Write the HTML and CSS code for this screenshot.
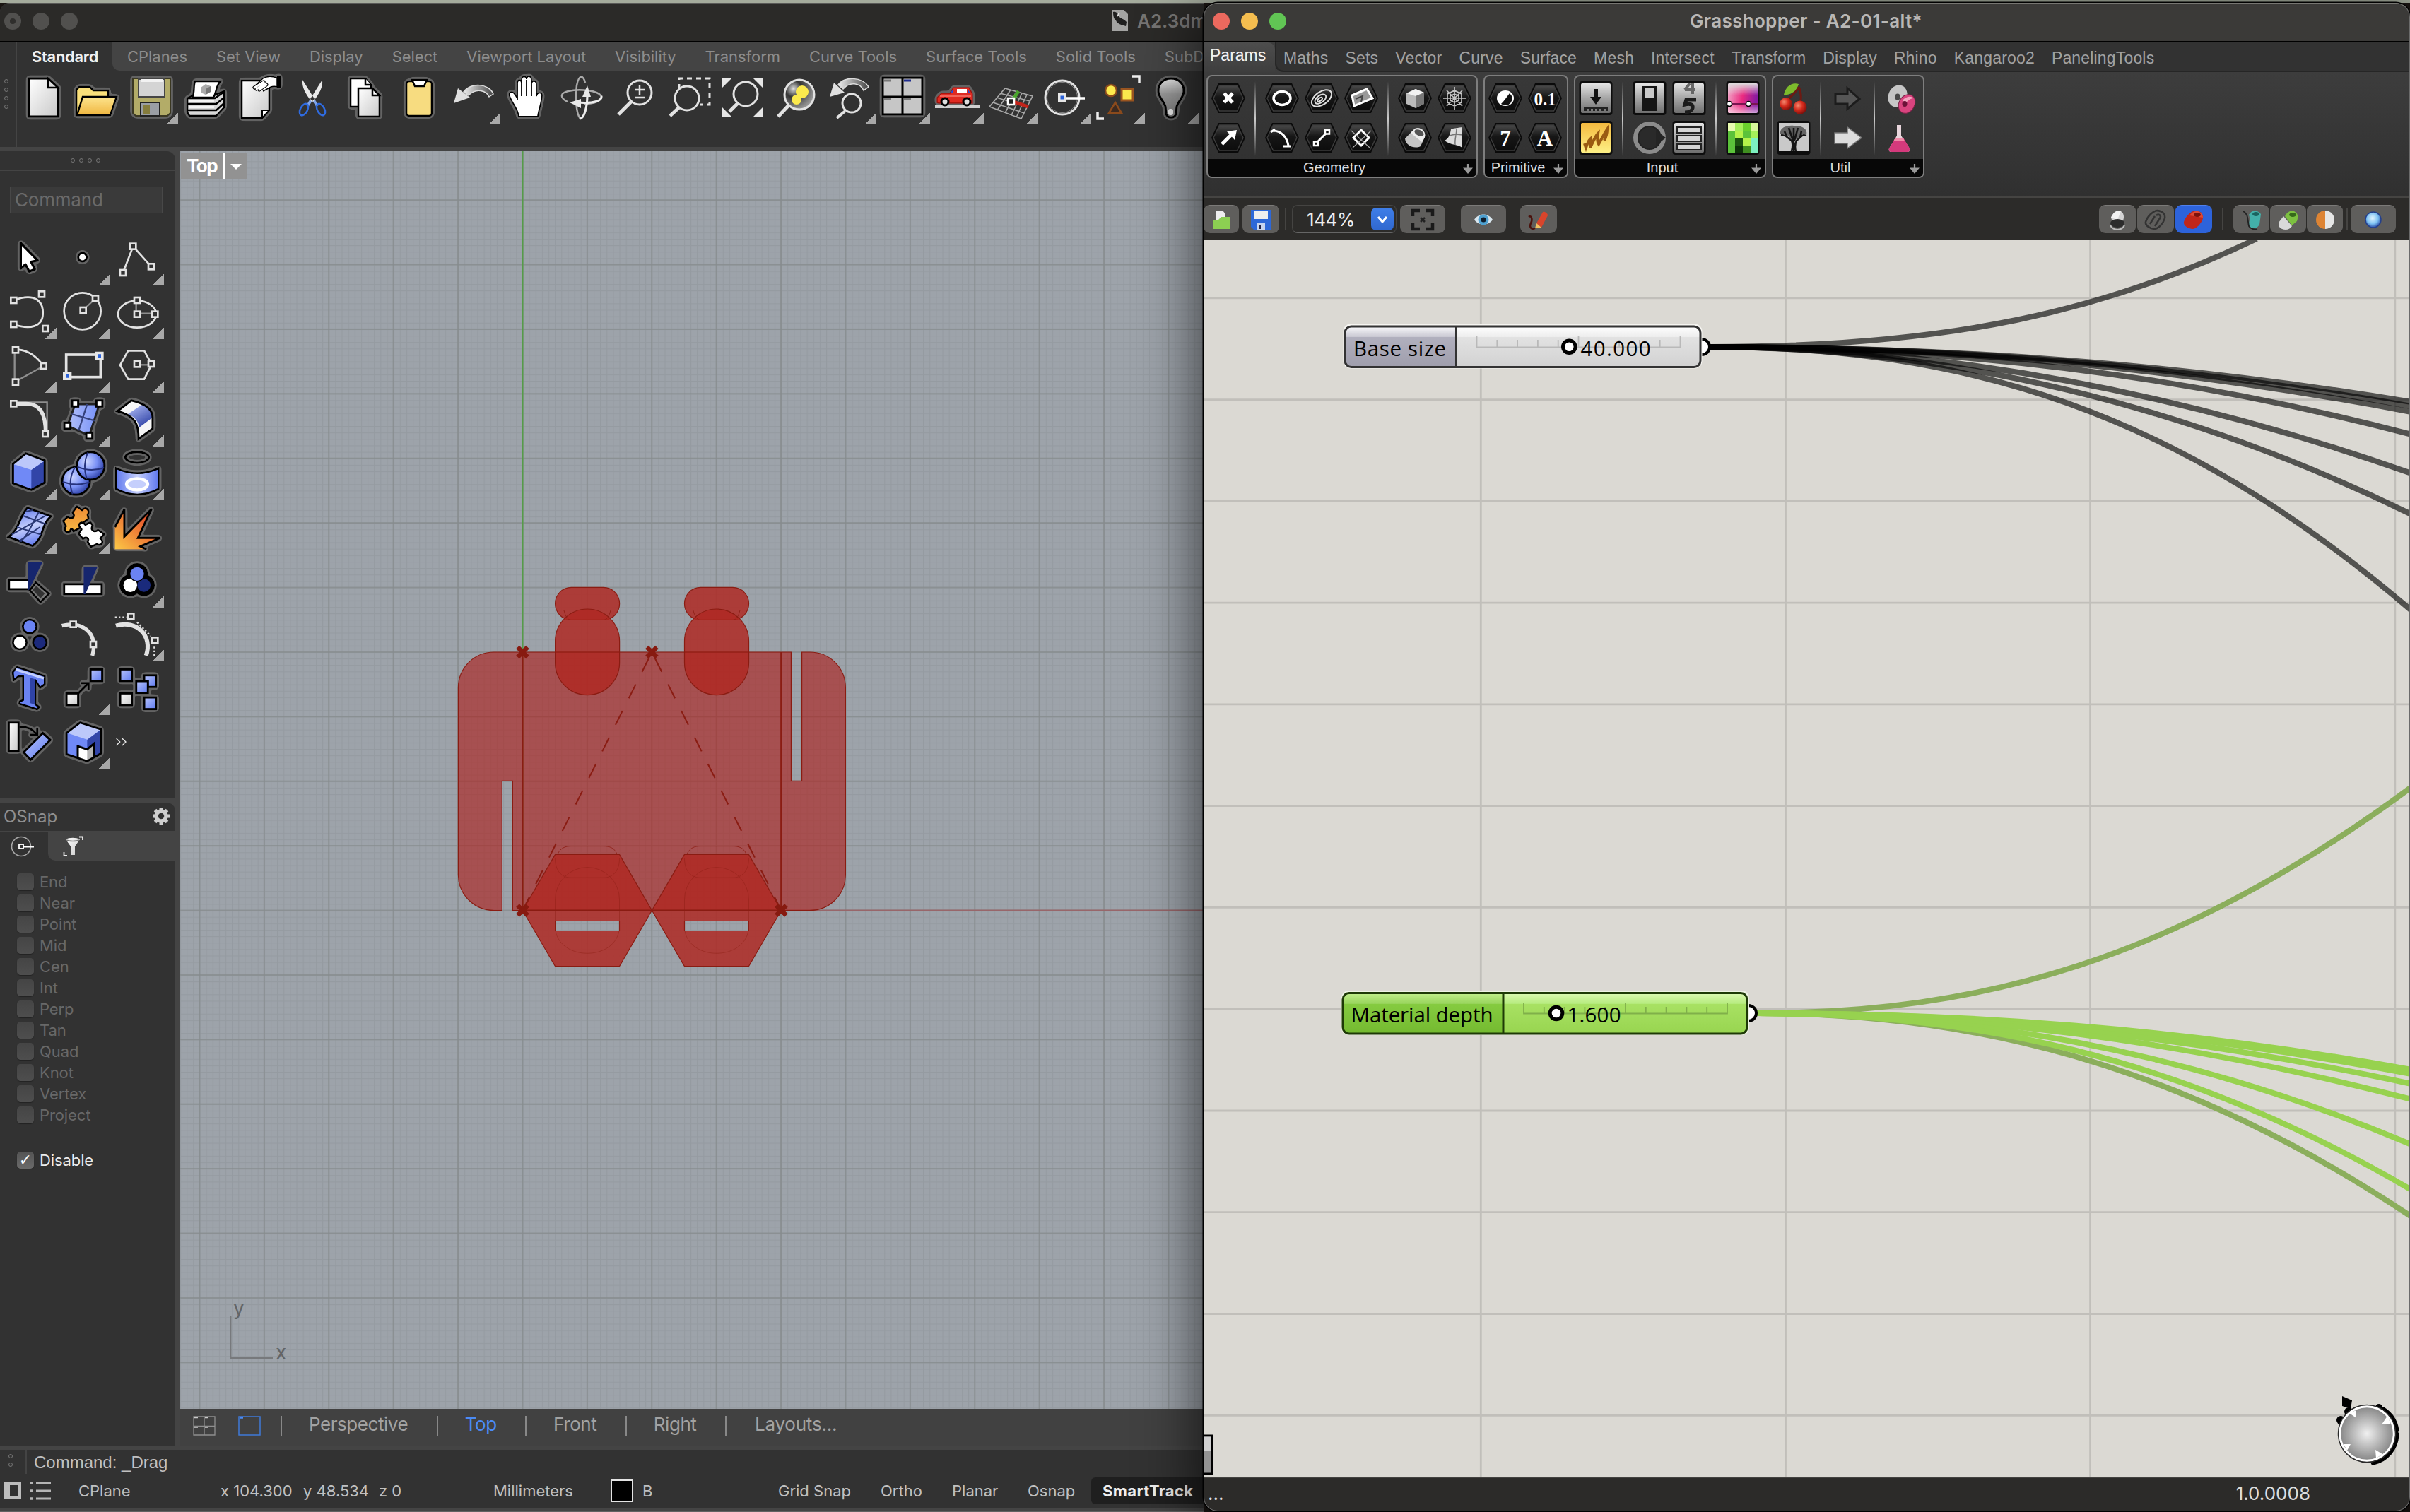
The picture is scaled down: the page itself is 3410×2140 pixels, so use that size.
FILE: index.html
```html
<!DOCTYPE html>
<html lang="en">
<head>
<meta charset="utf-8">
<title>Grasshopper - A2-01-alt*</title>
<link rel="stylesheet" href="styles.css">
</head>
<body>
<svg class="defs" width="0" height="0" aria-hidden="true">
  <defs>
    <filter id="halo" x="-30%" y="-30%" width="160%" height="160%"><feGaussianBlur in="SourceAlpha" stdDeviation="6"/><feComponentTransfer><feFuncA type="linear" slope="14" intercept="-0.9"/></feComponentTransfer><feComposite in2="SourceAlpha" operator="over" result="m"/><feFlood flood-color="#636363"/><feComposite in2="m" operator="in"/><feMerge><feMergeNode/><feMergeNode in="SourceGraphic"/></feMerge></filter>
    <filter id="halo2" x="-30%" y="-30%" width="160%" height="160%"><feGaussianBlur in="SourceAlpha" stdDeviation="2"/><feComponentTransfer><feFuncA type="linear" slope="14" intercept="-0.9"/></feComponentTransfer><feComposite in2="SourceAlpha" operator="over" result="m"/><feFlood flood-color="#636363"/><feComposite in2="m" operator="in"/><feMerge><feMergeNode/><feMergeNode in="SourceGraphic"/></feMerge></filter>
    <linearGradient id="paper" x1="0" y1="0" x2="1" y2="1"><stop offset="0" stop-color="#fff"/><stop offset="1" stop-color="#c9c9c9"/></linearGradient>
    <linearGradient id="gold" x1="0" y1="0" x2="0" y2="1"><stop offset="0" stop-color="#fde58e"/><stop offset="1" stop-color="#efb53f"/></linearGradient>
    <linearGradient id="blue" x1="0" y1="0" x2="1" y2="1"><stop offset="0" stop-color="#b9c5fb"/><stop offset="1" stop-color="#5f7bf0"/></linearGradient>
    <linearGradient id="blueV" x1="0" y1="0" x2="1" y2="0"><stop offset="0" stop-color="#b3c0fb"/><stop offset="1" stop-color="#7590f6"/></linearGradient>
    <linearGradient id="blueH" x1="0" y1="0" x2="1" y2="0"><stop offset="0" stop-color="#5f78ee"/><stop offset=".5" stop-color="#c5cffc"/><stop offset="1" stop-color="#5f78ee"/></linearGradient>
    <linearGradient id="sheet" x1=".3" y1="0" x2=".6" y2="1"><stop offset="0" stop-color="#5f78ee"/><stop offset=".5" stop-color="#c5cffc"/><stop offset="1" stop-color="#5f78ee"/></linearGradient>
    <linearGradient id="fold" x1="0" y1="0" x2=".6" y2="1"><stop offset="0" stop-color="#b9c5fb"/><stop offset="1" stop-color="#3346a8"/></linearGradient>
    <radialGradient id="ball" cx=".35" cy=".35" r=".75"><stop offset="0" stop-color="#cfd8ff"/><stop offset=".5" stop-color="#7b92f6"/><stop offset="1" stop-color="#1d2f96"/></radialGradient>
    <linearGradient id="fire" x1="0" y1="1" x2="1" y2="0"><stop offset="0" stop-color="#fbc847"/><stop offset=".5" stop-color="#ee7a35"/><stop offset="1" stop-color="#e02a22"/></linearGradient>
    <linearGradient id="orange" x1="0" y1="0" x2="0" y2="1"><stop offset="0" stop-color="#ec8a35"/><stop offset="1" stop-color="#f7b944"/></linearGradient>
    <linearGradient id="arrow" x1="0" y1="0" x2="1" y2="0"><stop offset="0" stop-color="#eee"/><stop offset=".5" stop-color="#9a9a9a"/><stop offset="1" stop-color="#444"/></linearGradient>
    <radialGradient id="dome" cx=".3" cy=".3" r=".8"><stop offset="0" stop-color="#ddd"/><stop offset=".35" stop-color="#333"/><stop offset="1" stop-color="#aaa"/></radialGradient>
    <linearGradient id="bulb" x1="0" y1="0" x2="0" y2="1"><stop offset="0" stop-color="#e8e8e8"/><stop offset=".4" stop-color="#999"/><stop offset="1" stop-color="#777"/></linearGradient>
    <linearGradient id="hexfill" x1="0" y1="0" x2="0" y2="1"><stop offset="0" stop-color="#4a4a4a"/><stop offset=".45" stop-color="#161616"/><stop offset="1" stop-color="#0c0c0c"/></linearGradient>
    <linearGradient id="steel" x1="0" y1="0" x2="0" y2="1"><stop offset="0" stop-color="#e4e4e4"/><stop offset=".5" stop-color="#a5a5a5"/><stop offset="1" stop-color="#6f6f6f"/></linearGradient>
    <linearGradient id="pink" x1="0" y1="0" x2="1" y2=".15"><stop offset="0" stop-color="#f3aaca"/><stop offset=".55" stop-color="#ea2a80"/><stop offset="1" stop-color="#8a1aa0"/></linearGradient>
    <linearGradient id="sheen" x1="0" y1="0" x2="0" y2="1"><stop offset="0" stop-color="#ddd"/><stop offset=".4" stop-color="#ddd" stop-opacity="0"/><stop offset=".7" stop-color="#fff" stop-opacity="0"/><stop offset="1" stop-color="#fff" stop-opacity=".6"/></linearGradient>
    <linearGradient id="note" x1="0" y1="0" x2="0" y2="1"><stop offset="0" stop-color="#f4b93f"/><stop offset="1" stop-color="#fdf085"/></linearGradient>
    <radialGradient id="cherry" cx=".35" cy=".35" r=".7"><stop offset="0" stop-color="#f58a70"/><stop offset=".5" stop-color="#d42a1c"/><stop offset="1" stop-color="#7c0f0a"/></radialGradient>
    <radialGradient id="sky" cx=".45" cy=".4" r=".6"><stop offset="0" stop-color="#e4f6ff"/><stop offset=".6" stop-color="#7ec2f3"/><stop offset="1" stop-color="#2c4fa8"/></radialGradient>
    <radialGradient id="dial"><stop offset="0" stop-color="#f0f0f0"/><stop offset="1" stop-color="#868686"/></radialGradient>
    <linearGradient id="capA" x1="0" y1="0" x2="0" y2="1"><stop offset="0" stop-color="#fafafc"/><stop offset=".26" stop-color="#c9c8d2"/><stop offset=".27" stop-color="#b1b0be"/><stop offset="1" stop-color="#9f9eac"/></linearGradient>
    <linearGradient id="capB" x1="0" y1="0" x2="0" y2="1"><stop offset="0" stop-color="#fff"/><stop offset=".26" stop-color="#ededed"/><stop offset=".27" stop-color="#e2e2e2"/><stop offset="1" stop-color="#d2d2d2"/></linearGradient>
    <linearGradient id="capC" x1="0" y1="0" x2="0" y2="1"><stop offset="0" stop-color="#c2f08c"/><stop offset=".26" stop-color="#98d45c"/><stop offset=".27" stop-color="#85cb40"/><stop offset="1" stop-color="#74ba30"/></linearGradient>
    <linearGradient id="capD" x1="0" y1="0" x2="0" y2="1"><stop offset="0" stop-color="#dcfab4"/><stop offset=".26" stop-color="#b6eb7e"/><stop offset=".27" stop-color="#a8e163"/><stop offset="1" stop-color="#98d550"/></linearGradient>
    <g id="nd"><rect x="-12" y="-12" width="24" height="24" fill="#323232" stroke="#e2e2e2" stroke-width="8"/></g>
    <g id="bn"><rect x="-13" y="-13" width="26" height="26" fill="#fff" stroke="#000" stroke-width="9"/></g>
    <g id="hex"><path d="M-24 0 -14 -21H14L24 0 14 21H-14Z" fill="#0a0a0a"/><path d="M-21 0 -12.500 -18H12.500L21 0 12.500 18H-12.500Z" fill="url(#hexfill)" stroke="#3c3c3c" stroke-width="1.500"/></g>
    <g id="tile"><rect x="-23.500" y="-24" width="47" height="48" rx="4" fill="#0d0d0d"/><rect x="-21" y="-21" width="42" height="42" rx="2" fill="url(#steel)"/></g>
    <pattern id="minor" patternUnits="userSpaceOnUse" x="739.4" y="1288.5" width="9.14" height="9.14"><path d="M0 .5H9.14M.5 0V9.14" stroke="#959ba1" stroke-width="1.300"/></pattern>
    <pattern id="major" patternUnits="userSpaceOnUse" x="738.4" y="1287.5" width="91.4" height="91.4"><path d="M0 1H91.4M1 0V91.4" stroke="#868b8d" stroke-width="1.500"/></pattern>
  </defs>
</svg>

<div class="screen">
<section class="window rhino">
  <header class="titlebar">
    <span class="light dirty"></span><span class="light"></span><span class="light"></span>
    <div class="doc">
      <svg width="23" height="30" viewBox="0 0 23 30"><path d="M0 0H17L23 6V30H0Z" fill="#a3a3a2"/><path d="M2 3C6 2 9 5 10 9C12 12 18 13 21 17L20 23C14 21 8 20 6 15C3 13 2 8 2 3Z" fill="#1f1f1f"/><path d="M11 4 8 9" stroke="#ddd" stroke-width="2"/></svg>
      <span>A2.3dm</span>
    </div>
  </header>
  <div class="tools">
    <div class="grip"><i></i><i></i><i></i><i></i></div>
    <div class="toolmain">
      <nav class="rtabs"><b>Standard</b><div class="rest"><span>CPlanes</span><span>Set View</span><span>Display</span><span>Select</span><span>Viewport Layout</span><span>Visibility</span><span>Transform</span><span>Curve Tools</span><span>Surface Tools</span><span>Solid Tools</span><span>SubD</span></div></nav>
      <div class="iconbar">
        <svg viewBox="24 100 76 76"><g filter="url(#halo2)"><path d="M41 111H68L82 124V165H41Z" fill="url(#paper)" stroke="#000" stroke-width="3"/><path d="M68 111V124H82Z" fill="#ddd" stroke="#000" stroke-width="2.500"/></g></svg>
        <svg viewBox="100 100 76 76"><g filter="url(#halo2)"><path d="M108 163V127L112 123H127L132 128H153V163Z" fill="#fae07a" stroke="#000" stroke-width="2.500"/><path d="M109 163 117 137H165L156 163Z" fill="url(#gold)" stroke="#000" stroke-width="2.500"/></g></svg>
        <svg class="more" viewBox="176 100 76 76"><g filter="url(#halo2)"><path d="M188 111H241V160L237 164H192L188 160Z" fill="#b3ac68" stroke="#3a3820" stroke-width="2"/><rect x="196" y="112" width="37" height="25" fill="#d4d4d4" stroke="#444" stroke-width="2"/><rect x="199" y="145" width="27" height="19" fill="#9a9ea4" stroke="#222" stroke-width="2"/><rect x="203" y="149" width="9" height="13" fill="#857c3c"/></g><rect x="199" y="112" width="31" height="4" fill="#f2f2f2"/></svg>
        <svg viewBox="252 100 76 76"><g filter="url(#halo2)" stroke="#000" stroke-width="2.500"><path d="M265 139 275 134H305L317 129V152L306 164H268L265 159Z" fill="#d8d8d8"/><path d="M276 115H312C305 122 307 130 302 138H272C276 130 273 122 276 115Z" fill="#fff"/><path d="M265 139H304L317 130M265 147H306L317 138M264 156H306L317 146" fill="none"/></g><path d="M284 124 291 119 298 122V130L291 134 284 131Z" fill="#aaa"/><path d="M291 126 298 122V130L291 134Z" fill="#777"/><path d="M268 143H303M268 151.500H303" stroke="#f4f4f4" stroke-width="3"/></svg>
        <svg viewBox="328 100 76 76"><g filter="url(#halo2)"><path d="M342 114H381V156L371 167H342Z" fill="url(#paper)" stroke="#000" stroke-width="2.500"/><path d="M371 167V156H381Z" fill="#fff" stroke="#000" stroke-width="2"/><path d="M358 124 372 111C378 107 386 108 392 110V123C386 121 382 123 378 126L372 129" fill="#fff" stroke="#000" stroke-width="1.500"/><path d="M360 124 373 116M363 126 375 118M367 127 377 120" stroke="#000" stroke-width="5" stroke-linecap="round"/><path d="M360 124 373 116M363 126 375 118M367 127 377 120" stroke="#fff" stroke-width="2.800" stroke-linecap="round"/><path d="M392 107H397V124H392Z" fill="#000"/></g></svg>
        <svg viewBox="404 100 76 76"><path d="M440 142 435 150M444 142 449 150" fill="none" stroke="#7fa2e6" stroke-width="4"/><path d="M428 113C427 124 432 132 441 144L445 140ZM456 113C457 124 452 132 443 144L439 140Z" fill="#e9e9e9"/><g fill="none" stroke="#2f6be0" stroke-width="2.500"><ellipse cx="430" cy="155" rx="5" ry="9" transform="rotate(28 430 155)"/><ellipse cx="454" cy="155" rx="5" ry="9" transform="rotate(-28 454 155)"/></g></svg>
        <svg viewBox="480 100 76 76"><g filter="url(#halo2)" fill="#fff" stroke="#000" stroke-width="2.500"><path d="M496 111H517L525 120V151H496Z"/><path d="M517 111V120H525"/><path d="M507 125H527L537 135V165H507Z" fill="url(#paper)"/><path d="M527 125V135H537Z"/></g></svg>
        <svg viewBox="556 100 76 76"><g filter="url(#halo2)" stroke="#000" stroke-width="2.500"><rect x="575" y="115" width="36" height="49" rx="4" fill="#f7dc80"/><path d="M583 113H604L600 122H587Z" fill="#fff"/></g></svg>
        <svg class="more" viewBox="632 100 76 76"><path d="M656 130C666 116 692 118 698 133L692 137C688 128 674 124 663 135Z" fill="url(#arrow)" stroke="#ddd" stroke-width="1.500"/><path d="M642 146 648 125 665 138Z" fill="#e0e0e0"/></svg>
        <svg viewBox="708 100 76 76"><g filter="url(#halo2)"><path d="M734 165C733 154 725 147 721 136C719 130 725 128 729 134L732 139V118C732 112 738 112 738 118V113C738 107 745 107 745 112C746 106 752 107 752 113V118C753 113 759 114 759 119V136C760 130 767 130 767 135C766 147 762 156 761 165Z" fill="#fff" stroke="#000" stroke-width="1.800"/><path d="M738 116V136M745 113V136M752 116V136" stroke="#000" stroke-width="1.800"/></g></svg>
        <svg viewBox="784 100 76 76"><g fill="none" stroke="#aaa" stroke-width="2.500"><path d="M828 117C825 106 819 105 816 121C814 140 815 160 821 168C827 168 831 150 831 135"/><path d="M803 144C793 139 791 132 804 129C820 125 846 128 851 136C852 142 842 147 826 147"/></g><path d="M820 168C827 168 831 150 831 135M851 136C852 142 842 147 816 145" fill="none" stroke="#eee" stroke-width="3"/><path d="M824 137 831 121 836 137ZM822 140V153L806 145Z" fill="#e8e8e8"/></svg>
        <svg viewBox="860 100 76 76"><path d="M893 144 875 162" stroke="#e2e2e2" stroke-width="5"/><circle cx="905" cy="131" r="17" class="lens"/><path d="M898 127H912M905 120V134M898 138H912" stroke="#e2e2e2" stroke-width="2.500"/></svg>
        <svg viewBox="936 100 76 76"><path d="M961 126V111H1004V148H990" fill="none" stroke="#e2e2e2" stroke-width="3" stroke-dasharray="7 6"/><path d="M961 152 948 164" stroke="#e2e2e2" stroke-width="5"/><circle cx="972" cy="139" r="17" class="lens"/></svg>
        <svg viewBox="1012 100 76 76"><path d="M1022 110H1036L1022 124ZM1079 110H1065L1079 124ZM1022 166V152L1036 166ZM1079 166V152L1065 166Z" fill="#e6e6e6"/><path d="M1044 146 1032 158" stroke="#e2e2e2" stroke-width="5"/><circle cx="1055" cy="133" r="17" class="lens"/></svg>
        <svg viewBox="1088 100 76 76"><path d="M1116 149 1101 165" stroke="#e2e2e2" stroke-width="5"/><circle cx="1131" cy="134" r="21" fill="url(#dome)" stroke="#e2e2e2" stroke-width="3"/><circle cx="1135" cy="130" r="9" fill="#fbe94d"/><circle cx="1127" cy="141" r="7" fill="#fbe94d"/></svg>
        <svg class="more" viewBox="1164 100 76 76"><path d="M1186 120C1194 108 1220 108 1229 123L1222 128C1217 117 1202 115 1193 126Z" fill="url(#arrow)" stroke="#ddd" stroke-width="1.500"/><path d="M1174 137 1180 117 1195 131Z" fill="#e0e0e0"/><path d="M1196 157 1184 167" stroke="#e2e2e2" stroke-width="4"/><circle cx="1205" cy="146" r="13" class="lens"/></svg>
        <svg class="more" viewBox="1240 100 76 76"><g filter="url(#halo2)"><rect x="1249" y="110" width="56" height="52" fill="#c6c6c6" stroke="#000" stroke-width="3"/><path d="M1277 110V162M1249 137H1305" stroke="#000" stroke-width="3"/></g><path d="M1251 114H1261M1251 140H1261M1279 140H1289" stroke="#777" stroke-width="3"/><path d="M1279 114H1289" stroke="#1f2c8e" stroke-width="3"/></svg>
        <svg class="more" viewBox="1316 100 76 76"><g filter="url(#halo2)"><path d="M1326 145V138L1332 132H1344L1349 124H1371L1376 133V146H1328Z" fill="#df2b22" stroke="#9a130c" stroke-width="1.500"/></g><rect x="1323" y="149" width="63" height="4" fill="#cfcfcf"/><rect x="1354" y="126" width="14" height="6" fill="#fff"/><path d="M1344 132 1348 127V132ZM1370 127 1373 132H1370Z" fill="#2a4bd0"/><path d="M1330 136H1374" stroke="#f0645a" stroke-width="2"/><g fill="#ddd" stroke="#000" stroke-width="3"><circle cx="1337" cy="144" r="5"/><circle cx="1368" cy="144" r="5"/></g></svg>
        <svg class="more" viewBox="1392 100 76 76"><g fill="none" stroke="#a8a8a8" stroke-width="1.600"><path d="M1422 125 1461 136 1445 168 1400 151ZM1415 132 1457 143M1410 138 1453 151M1405 145 1449 160M1430 127 1411 156M1438 130 1422 160M1446 132 1431 163M1453 134 1438 166"/></g><path d="M1434 140 1441 129" stroke="#4aa52c" stroke-width="5"/><path d="M1434 144 1455 151" stroke="#c2231a" stroke-width="5"/><rect x="1426" y="139" width="9" height="9" fill="#222" stroke="#fff" stroke-width="2.500"/></svg>
        <svg class="more" viewBox="1468 100 76 76"><circle cx="1503" cy="138" r="24" fill="none" stroke="#e2e2e2" stroke-width="3"/><circle cx="1503" cy="138" r="21.500" fill="none" stroke="#888" stroke-width="1"/><path d="M1507 139H1535" stroke="#fff" stroke-width="3.500"/><rect x="1497" y="132" width="12" height="12" fill="#e6e6e6"/><rect x="1500.500" y="135.500" width="5" height="5" fill="#2b62d9"/></svg>
        <svg class="more" viewBox="1544 100 76 76"><circle cx="1572" cy="128" r="8" fill="#fbe94d" stroke="#8a4a1c" stroke-width="2.500"/><rect x="1587" y="126" width="16" height="16" fill="#fbe94d" stroke="#9a5520" stroke-width="3"/><path d="M1578 145 1587 160H1569Z" fill="#3c2a20" stroke="#8a4a1c" stroke-width="2.500"/><path d="M1602 108H1612V117M1553 158V168H1562" fill="none" stroke="#eee" stroke-width="3.500"/></svg>
        <svg class="more" viewBox="1620 100 76 76"><g filter="url(#halo2)"><path d="M1657 111C1668 111 1676 119 1675 130C1674 139 1667 143 1665 151L1664 161C1663 168 1651 168 1650 161L1649 151C1647 143 1640 139 1639 130C1638 119 1646 111 1657 111Z" fill="url(#bulb)" stroke="#000" stroke-width="3"/></g><rect x="1653" y="154" width="7" height="9" rx="3" fill="#e8e8e8"/></svg>
      </div>
    </div>
  </div>
  <div class="work">
    <aside class="side">
      <div class="sidegrip"><i></i><i></i><i></i><i></i></div>
      <div class="palettebox">
        <div class="cmd">Command</div>
        <div class="palette">
          <svg viewBox="12 384 228 228"><g filter="url(#halo)"><path d="M88 432V540L108 523 124 553 148 543 132 512 160 506Z" fill="#fff" stroke="#000" stroke-width="10" stroke-linejoin="round"/></g></svg>
          <svg class="more" viewBox="240 384 228 228"><g filter="url(#halo)"><circle cx="350" cy="492" r="18" fill="#fff" stroke="#000" stroke-width="9"/></g></svg>
          <svg class="more" viewBox="468 384 228 228"><path class="wl" d="M522 558 565 446 642 532"/><use href="#nd" x="522" y="558"/><use href="#nd" x="565" y="446"/><use href="#nd" x="642" y="532"/></svg>

          <svg class="more" viewBox="12 612 228 228"><path class="wl" d="M58 675C150 640 185 680 182 735C180 785 130 802 58 777"/><use href="#nd" x="58" y="675"/><use href="#nd" x="177" y="649"/><use href="#nd" x="58" y="777"/><use href="#nd" x="193" y="795"/></svg>
          <svg class="more" viewBox="240 612 228 228"><circle class="wl" cx="350" cy="721" r="78"/><path class="gl" d="M353 717 405 667"/><use href="#nd" x="353" y="717"/><use href="#nd" x="405" y="667"/></svg>
          <svg class="more" viewBox="468 612 228 228"><ellipse class="wl" cx="582" cy="734" rx="81" ry="57"/><path class="gl" d="M578 675V731H658"/><use href="#nd" x="582" y="675"/><use href="#nd" x="582" y="734"/><use href="#nd" x="658" y="734"/></svg>

          <svg class="more" viewBox="12 840 228 228"><path class="gl" d="M62 886V1022L185 954"/><path class="wl" d="M66 884C110 884 150 905 185 954"/><use href="#nd" x="66" y="886"/><use href="#nd" x="66" y="1022"/><use href="#nd" x="185" y="954"/></svg>
          <svg class="more" viewBox="240 840 228 228"><rect x="281" y="906" width="146" height="95" fill="none" stroke="#e2e2e2" stroke-width="11"/><path d="M403 893H440V930H403ZM267 978H304V1014H267Z" fill="#e6e6e6"/><path d="M414 904H429V919H414ZM279 989H294V1004H279Z" fill="#2b62d9"/></svg>
          <svg class="more" viewBox="468 840 228 228"><path class="wl" d="M510 950 544 889H612L644 947 612 1010H544Z"/><path class="gl" d="M582 949H642"/><use href="#nd" x="582" y="946"/><use href="#nd" x="642" y="945"/></svg>

          <svg class="more" viewBox="12 1068 228 228"><path class="gl" d="M58 1108H200V1242"/><path d="M58 1114H110C170 1114 194 1155 194 1242" fill="none" stroke="#e2e2e2" stroke-width="16"/><use href="#nd" x="58" y="1114"/><use href="#nd" x="193" y="1242"/></svg>
          <svg class="more" viewBox="240 1068 228 228"><g filter="url(#halo)"><path d="M319 1116H422L379 1250 286 1208Z" fill="url(#blueV)" stroke="#222" stroke-width="9"/><path d="M370 1116 334 1228M304 1158 402 1186" stroke="#36427c" stroke-width="7"/><use href="#bn" x="319" y="1113"/><use href="#bn" x="422" y="1113"/><use href="#bn" x="286" y="1208"/><use href="#bn" x="379" y="1250"/></g></svg>
          <svg class="more" viewBox="468 1068 228 228"><g filter="url(#halo)"><path d="M498 1146 558 1100C610 1112 648 1135 648 1172V1220L588 1264C588 1200 575 1165 498 1146Z" fill="#f6f6f6"/><path d="M543 1158 606 1116C640 1135 648 1150 648 1172L590 1216C588 1190 575 1172 543 1158Z" fill="url(#fold)"/><path d="M498 1146 558 1100C610 1112 648 1135 648 1172V1220L588 1264C588 1200 575 1165 498 1146Z" fill="none" stroke="#000" stroke-width="9"/></g></svg>

          <svg class="more" viewBox="12 1296 228 228"><g filter="url(#halo)"><path d="M55 1370 110 1325 190 1355V1449L133 1480 55 1452Z" fill="#6f89f6"/><path d="M133 1395 190 1357V1449L133 1480Z" fill="#3145a8"/><path d="M55 1370 110 1325 190 1355 133 1395Z" fill="#bcc8fa"/><path d="M55 1370 110 1325 190 1355V1449L133 1480 55 1452Z" fill="none" stroke="#000" stroke-width="9"/></g></svg>
          <svg class="more" viewBox="240 1296 228 228"><g filter="url(#halo)"><circle cx="323" cy="1442" r="59" fill="url(#ball)" stroke="#000" stroke-width="9"/><path d="M266 1446Q322 1466 380 1448M318 1384Q286 1440 308 1498" fill="none" stroke="#26337c" stroke-width="6"/><circle cx="385" cy="1378" r="59" fill="url(#ball)" stroke="#000" stroke-width="9"/><path d="M328 1382Q384 1406 442 1386M372 1322Q350 1375 368 1434" fill="none" stroke="#26337c" stroke-width="6"/></g></svg>
          <svg class="more" viewBox="468 1296 228 228"><g filter="url(#halo)"><path d="M493 1388Q582 1430 673 1388V1476Q582 1524 493 1476Z" fill="url(#blueH)" stroke="#000" stroke-width="8"/><ellipse cx="582" cy="1342" rx="50" ry="23" fill="none" stroke="#000" stroke-width="9"/></g><ellipse cx="582" cy="1342" rx="34" ry="10" fill="#323232"/><ellipse cx="582" cy="1456" rx="45" ry="24" fill="#c5cffc" stroke="#fff" stroke-width="13"/></svg>

          <svg class="more" viewBox="12 144 228 228"><g filter="url(#halo)"><path d="M116 176 216 212C170 255 190 300 138 338L36 300C85 265 80 215 116 176Z" fill="url(#sheet)" stroke="#000" stroke-width="9"/><path d="M166 194C140 230 130 280 88 320M98 210 196 246M72 258 174 290M50 290 196 208M80 318 170 258M110 192 140 186" fill="none" stroke="#2b3975" stroke-width="6"/></g></svg>
          <svg class="more" viewBox="240 144 228 228"><g filter="url(#halo)" stroke="#000" stroke-width="8" stroke-linejoin="round"><path d="M268 232 288 214C302 228 324 214 308 196L326 170 348 186C360 168 386 184 372 206L376 222 352 240 338 262 312 276C306 262 300 262 298 276C280 286 268 270 280 254Z" fill="url(#orange)"/><path d="M334 250C344 232 356 240 362 248L384 238 394 252C380 268 400 284 416 270L442 288 426 306C444 318 430 342 412 330L386 342 372 320C380 306 366 296 352 308L334 286 346 268Z" fill="#fff"/></g></svg>
          <svg viewBox="468 144 228 228"><g filter="url(#halo)"><path d="M488 352V258L528 182V298L644 180 586 304H680L596 340 622 352Z" fill="url(#fire)"/><path d="M488 258 528 182V298L644 180 586 304H680L596 340 622 352" fill="none" stroke="#000" stroke-width="9"/></g></svg>

          <svg viewBox="12 372 228 228"><g filter="url(#halo)"><path d="M38 483H122V522H38Z" fill="#fff" stroke="#000" stroke-width="9"/><path d="M152 493 208 541 172 577 126 526Z" fill="#777" stroke="#000" stroke-width="8"/><path d="M154 508 190 540 172 560 138 524Z" fill="#323232"/><path d="M118 408H180L123 526H118Z" fill="#16256e"/></g></svg>
          <svg viewBox="240 372 228 228"><g filter="url(#halo)"><path d="M272 500H432V542H272Z" fill="#fff" stroke="#000" stroke-width="9"/><path d="M355 427H414L362 543H355Z" fill="#16256e"/></g></svg>
          <svg class="more" viewBox="468 372 228 228"><g filter="url(#halo)"><circle cx="553" cy="505" r="46"/><circle cx="611" cy="505" r="46"/><circle cx="582" cy="457" r="46"/></g><circle cx="611" cy="505" r="28" fill="#1a2a7c"/><circle cx="553" cy="505" r="29" fill="#fff"/><circle cx="582" cy="457" r="31" fill="#6b83f3" stroke="#000" stroke-width="4"/></svg>

          <svg viewBox="12 600 228 228"><g filter="url(#halo)" stroke="#000" stroke-width="8"><circle cx="126" cy="680" r="29" fill="#6b83f3"/><circle cx="84" cy="748" r="29" fill="#fff"/><circle cx="169" cy="748" r="29" fill="#1a2a7c"/></g></svg>
          <svg viewBox="240 600 228 228"><path d="M263 677C340 655 420 700 392 804" fill="none" stroke="#e2e2e2" stroke-width="16"/><use href="#nd" x="311" y="671"/><use href="#nd" x="396" y="756"/></svg>
          <svg class="more" viewBox="468 600 228 228"><path d="M492 677C580 650 650 720 620 804" fill="none" stroke="#e2e2e2" stroke-width="18"/><path d="M488 641H540M582 662 640 720M655 766V810" stroke="#e2e2e2" stroke-width="7" stroke-dasharray="7 9" fill="none"/><use href="#nd" x="556" y="637"/><use href="#nd" x="658" y="739"/></svg>

          <svg viewBox="12 828 228 228"><g filter="url(#halo)"><path d="M72 852 190 890V925L170 940 150 908V1010L166 1022 158 1032 82 1008 84 998 98 992V890L78 892 58 908 54 874Z" fill="#6b83f3" stroke="#000" stroke-width="8" stroke-linejoin="round"/></g><path d="M126 898 150 904V1012L126 1005Z" fill="#2f43a6"/><path d="M66 862 186 900" stroke="#c5d0fc" stroke-width="10"/></svg>
          <svg class="more" viewBox="240 828 228 228"><g filter="url(#halo)"><path d="M332 964 374 922M344 920H376V950" fill="none" stroke="#000" stroke-width="9"/><rect x="282" y="964" width="50" height="50" fill="url(#paper)" stroke="#000" stroke-width="9"/><rect x="384" y="862" width="50" height="50" fill="url(#blue)" stroke="#000" stroke-width="9"/></g></svg>
          <svg viewBox="468 828 228 228"><g filter="url(#halo)" stroke="#000" stroke-width="9"><rect x="510" y="862" width="50" height="50" fill="url(#blue)"/><rect x="510" y="964" width="50" height="50" fill="url(#paper)"/><rect x="612" y="887" width="50" height="50" fill="url(#blue)"/><rect x="578" y="912" width="50" height="50" fill="url(#blue)"/><rect x="612" y="981" width="50" height="50" fill="url(#blue)"/></g></svg>

          <svg viewBox="12 1056 228 228"><g filter="url(#halo)"><path d="M82 1106C115 1104 140 1118 156 1138M126 1140H158V1110" fill="none" stroke="#000" stroke-width="9"/><rect x="37" y="1088" width="42" height="120" fill="url(#paper)" stroke="#000" stroke-width="9"/><path d="M182 1132 214 1162 130 1246 100 1214Z" fill="url(#blue)" stroke="#000" stroke-width="9"/></g></svg>
          <svg class="more" viewBox="240 1056 228 228"><g filter="url(#halo)"><path d="M282 1132 340 1088 428 1116V1220L370 1252 282 1222Z" fill="#6f89f6"/><path d="M370 1160 428 1118V1220L370 1252Z" fill="#3145a8"/><path d="M284 1132 340 1090 426 1118 370 1160Z" fill="#bcc8fa"/><path d="M330 1188 370 1202 398 1178V1234L370 1250 330 1238Z" fill="#fff"/><path d="M370 1202 398 1178V1234L370 1250Z" fill="#b5b5b5"/><path d="M330 1238V1188L370 1202 398 1178V1234M282 1132 340 1088 428 1116V1220L370 1252 282 1222Z" fill="none" stroke="#000" stroke-width="9"/></g></svg>
          <svg viewBox="468 1056 228 228"><path d="M494 1156 509 1170 494 1185M519 1156 534 1170 519 1185" fill="none" stroke="#ececec" stroke-width="4"/></svg>
        </div>
      </div>
      <div class="osnap">
        <div class="oshead"><span>OSnap</span><svg width="26" height="26" viewBox="-13 -13 26 26"><circle r="7" fill="none" stroke="#cfcfcf" stroke-width="5.500"/><path d="M0 -12V-8M0 12V8M-12 0H-8M12 0H8M-8.500 -8.500-6 -6M8.500 8.500 6 6M-8.500 8.500-6 6M8.500 -8.500 6 -6" stroke="#cfcfcf" stroke-width="5"/></svg></div>
        <div class="ostabs">
          <div class="on"><svg width="34" height="30" viewBox="0 0 34 30"><circle cx="15" cy="15" r="13.500" fill="none" stroke="#a9a9a9" stroke-width="1.600"/><path d="M18 15.500H33" stroke="#fff" stroke-width="2"/><rect x="12" y="12" width="6" height="6" fill="#323232" stroke="#fff" stroke-width="1.800"/></svg></div>
          <div class="off"><svg width="30" height="30" viewBox="0 0 30 30"><path d="M4 5C9 2 19 2 24 5L17 15V27H11V15Z" fill="url(#paper)"/><path d="M5 6C9 8 19 8 23 6" stroke="#777" fill="none" stroke-width="1.500"/><path d="M23 1.500H28V6M1.500 23V28H6" fill="none" stroke="#eee" stroke-width="1.800"/></svg></div>
        </div>
        <div class="checks"><label>End</label><label>Near</label><label>Point</label><label>Mid</label><label>Cen</label><label>Int</label><label>Perp</label><label>Tan</label><label>Quad</label><label>Knot</label><label>Vertex</label><label>Project</label><label class="yes">Disable</label></div>
      </div>
    </aside>
    <main class="view">
      <div class="viewport">
        <svg class="scene" viewBox="254 214 1449 1780">
          <rect x="254" y="214" width="1449" height="1780" fill="#9da3aa"/>
          <rect x="254" y="214" width="1449" height="1780" fill="url(#minor)"/>
          <rect x="254" y="214" width="1449" height="1780" fill="url(#major)"/>
          <path d="M739.5 214V1288" stroke="#559b48" stroke-width="2"/>
          <path d="M739.5 1288.500H1703" stroke="#98666a" stroke-width="2.200"/>
          <g stroke="#8a1c12" stroke-width="1.200">
            <path d="M698.900 923H1119.400V1105.400H1134.600V923H1146C1174 923 1196.400 945 1196.400 973.600V1238C1196.400 1266 1174 1288.500 1146 1288.500H725.400V1105.400H710.300V1288.500H698.900C671 1288.500 648.400 1266 648.400 1238V973.600C648.400 945 671 923 698.900 923Z" fill="rgba(174,16,10,.56)"/>
            <g id="leg">
              <path fill-rule="evenodd" d="M739.500 1288.500 785.600 1209.400H876.500L922.400 1288.500 876.500 1367.600H785.600ZM785.600 1303.500V1317.500H876.500V1303.500Z" fill="rgba(175,41,34,.84)"/>
              <rect x="785.600" y="831.400" width="91" height="46" rx="22.800" fill="rgba(175,41,34,.84)"/>
              <rect x="785.600" y="862" width="91" height="121.600" rx="45.500" fill="rgba(175,41,34,.84)"/>
              <path d="M789 1209C793 1200 800 1197.600 808 1197.600H854C862 1197.600 870 1200 873 1209" fill="none" stroke-width=".8"/>
              <g fill="none" stroke-width=".6" opacity=".7"><path d="M785.600 1215C785.600 1233 795 1242.200 808 1242.200H854C867 1242.200 876.500 1233 876.500 1215"/><path d="M785.600 1303V1273A45.400 45.400 0 0 1 876.500 1273V1303M786 1317C793 1360 869 1360 876 1317"/></g>
              <path d="M798 864C800 872 803 877.400 808 877.400H854C859 877.400 862 872 864 864" fill="none" stroke-width=".8"/>
            </g>
            <use href="#leg" x="182.900"/>
            <path d="M739.500 923V1288.500M1105.200 923V1288.500" stroke-width="2"/>
            <path d="M739.500 1288.500H1105.400" stroke-width="1.800"/>
            <path d="M785.600 923H876.500M968.500 923H1059.500" stroke-width="1"/>
            <path d="M922.400 923 739.500 1288.500M922.400 923 1105.400 1288.500" stroke-width="2" stroke-dasharray="22 20" stroke-dashoffset="-9"/>
            <path d="M732.500 916 746.500 930M746.500 916 732.500 930M732.500 1281.500 746.500 1295.500M746.500 1281.500 732.500 1295.500M915.400 916 929.400 930M929.400 916 915.400 930M1098.400 1281.500 1112.400 1295.500M1112.400 1281.500 1098.400 1295.500" stroke="#871a10" stroke-width="6.500"/>
          </g>
          <path d="M326.500 1862V1922H386" fill="none" stroke="#77797c" stroke-width="1.800"/>
          <text class="axis" x="330" y="1861">y</text><text class="axis" x="390" y="1924">x</text>
        </svg>
        <div class="viewtag"><b>Top</b><i></i></div>
      </div>
      <div class="viewtabs">
        <svg width="32" height="28" viewBox="0 0 32 28"><path d="M1 1H31V27H1ZM16 1V27M1 14.500H31" fill="none" stroke="#8f8f8f" stroke-width="1.300"/><path d="M2 2.500H7M17 2.500H22M2 16H7M17 16H22" stroke="#ccc" stroke-width="1.500"/></svg>
        <svg class="single" width="32" height="28" viewBox="0 0 32 28"><path d="M1 1H31V27H1Z" fill="none" stroke="#3f79d8" stroke-width="1.500"/><path d="M2 2.500H7" stroke="#4b8bf5" stroke-width="2.500"/></svg>
        <span>Perspective</span><span class="sel">Top</span><span>Front</span><span>Right</span><span>Layouts...</span>
      </div>
    </main>
  </div>
  <div class="cmdline"><div class="grip2"><i></i><i></i></div><span>Command: _Drag</span></div>
  <footer class="rstatus">
    <svg width="80" height="32" viewBox="0 0 80 32"><path d="M6 4H30V28H6Z" fill="#bdbdbd"/><path d="M14 8H25V24H14Z" fill="#323232"/><path d="M51 5H72M51 16H72M51 27H72" stroke="#b5b5b5" stroke-width="3"/><path d="M43 5H47M43 16H47M43 27H47" stroke="#b5b5b5" stroke-width="3.500"/></svg>
    <span class="s1">CPlane</span><span class="s2">x 104.300</span><span class="s3">y 48.534</span><span class="s4">z 0</span><span class="s5">Millimeters</span><i></i><span class="s6">B</span><span class="s7">Grid Snap</span><span class="s8">Ortho</span><span class="s9">Planar</span><span class="s10">Osnap</span><b>SmartTrack</b>
  </footer>
</section>

<section class="window gh">
  <header class="titlebar">
    <span class="light red"></span><span class="light yellow"></span><span class="light green"></span>
    <h1>Grasshopper - A2-01-alt*</h1>
  </header>
  <nav class="gtabs"><b>Params</b><div class="rest"><span>Maths</span><span>Sets</span><span>Vector</span><span>Curve</span><span>Surface</span><span>Mesh</span><span>Intersect</span><span>Transform</span><span>Display</span><span>Rhino</span><span>Kangaroo2</span><span>PanelingTools</span></div></nav>
  <div class="ribbon">
    <div class="group">
      <div class="cols">
        <div class="col">
          <svg viewBox="-28 -28 56 56"><use href="#hex"/><path d="M-6 -7 6 6M6 -7-6 6" stroke="#fff" stroke-width="5"/></svg>
          <svg viewBox="-28 -28 56 56"><use href="#hex"/><path d="M-9 9 4 -4" stroke="#fff" stroke-width="5"/><path d="M-2 -9 12 -11 9 3Z" fill="#fff"/></svg>
        </div>
        <u></u>
        <div class="col">
          <svg viewBox="-28 -28 56 56"><use href="#hex"/><ellipse rx="12" ry="9.500" fill="none" stroke="#fff" stroke-width="3.500"/></svg>
          <svg viewBox="-28 -28 56 56"><use href="#hex"/><path d="M-13 -10C0 -10 7 0 9 11M-16 -8-10 -12M1 12H12" fill="none" stroke="#fff" stroke-width="3"/></svg>
        </div>
        <div class="col">
          <svg viewBox="-28 -28 56 56"><use href="#hex"/><g fill="none" stroke="#ddd" stroke-width="2" transform="rotate(-35)"><ellipse rx="16" ry="9"/><ellipse cx="-2" rx="9" ry="5"/><ellipse cx="-3" rx="4" ry="2"/></g></svg>
          <svg viewBox="-28 -28 56 56"><use href="#hex"/><path d="M-8 8 8 -8" stroke="#fff" stroke-width="3"/><path d="M-11 5.500H-5V11H-11ZM5 -11H11V-5.500H5Z" fill="#111" stroke="#fff" stroke-width="2.500"/></svg>
        </div>
        <div class="col">
          <svg viewBox="-28 -28 56 56"><use href="#hex"/><path d="M-13 -4 8 -13 16 0-10 11Z" fill="#999" stroke="#fff" stroke-width="3"/><path d="M-8 1 2 -3 0 5" fill="none" stroke="#444" stroke-width="2"/></svg>
          <svg viewBox="-28 -28 56 56"><use href="#hex"/><path d="M0 -11 11 0 0 11-11 0Z" fill="none" stroke="#fff" stroke-width="3"/><path d="M-14 -10 12 14M14 -10-12 14" stroke="#aaa" stroke-width="1.200"/></svg>
        </div>
        <u></u>
        <div class="col">
          <svg viewBox="-28 -28 56 56"><use href="#hex"/><path d="M-12 -7 1 -13 13 -8V8L1 14-12 8Z" fill="#bbb"/><path d="M-12 -7 1 -13 13 -8 1 -3Z" fill="#f2f2f2"/><path d="M1 -3 13 -8V8L1 14Z" fill="#777"/></svg>
          <svg viewBox="-28 -28 56 56"><use href="#hex"/><path d="M-14 1 0 -13C8 -16 16 -9 14 -1L8 12C0 16-13 12-14 1Z" fill="#c4c4c4"/><path d="M-6 -7 0 -13C8 -16 16 -9 14 -1L10 6Z" fill="#eee"/><ellipse cx="6" cy="-7" rx="7" ry="4" transform="rotate(25 6 -7)" fill="#555"/></svg>
        </div>
        <div class="col">
          <svg viewBox="-28 -28 56 56"><use href="#hex"/><path d="M0 -16V16M-16 0H16M-11 -11 11 11M11 -11-11 11M-10 -6 0 -11 10 -6V6L0 11-10 6ZM-6 -3 0 -6 6 -3V3L0 6-6 3Z" fill="none" stroke="#c4c4c4" stroke-width="1.700"/></svg>
          <svg viewBox="-28 -28 56 56"><use href="#hex"/><path d="M-5 -12C0 -14 6 -14 11 -15V14C5 9-5 11-14 4C-8 1-6 -5-5 -12Z" fill="#ddd"/><path d="M3 -13C3 -5 0 2 1 10M-7 -3C-2 -5 6 -5 11 -4" stroke="#777" stroke-width="1.500" fill="none"/></svg>
        </div>
      </div>
      <div class="cap">Geometry<i></i></div>
    </div>
    <div class="group">
      <div class="cols">
        <div class="col">
          <svg viewBox="-28 -28 56 56"><use href="#hex"/><ellipse rx="12" ry="11" fill="#fff"/><path d="M6 -7C2 -2-1 3-6 8A8.500 8.500 0 0 0 6 -7Z" fill="#111"/></svg>
          <svg viewBox="-28 -28 56 56"><use href="#hex"/><text class="glyph" y="11">7</text></svg>
        </div>
        <div class="col">
          <svg viewBox="-28 -28 56 56"><use href="#hex"/><text class="glyph small" y="10">0.1</text></svg>
          <svg viewBox="-28 -28 56 56"><use href="#hex"/><text class="glyph" y="11">A</text></svg>
        </div>
      </div>
      <div class="cap">Primitive<i></i></div>
    </div>
    <div class="group">
      <div class="cols">
        <div class="col">
          <svg viewBox="-28 -28 56 56"><use href="#tile"/><path d="M-3 -13H3V-2H8L0 9-8 -2H-3Z" fill="#111"/><path d="M-17 12H17V18H14V15H11V18H8V15H5V18H2V15H-1V18H-4V15H-7V18H-10V15H-13V18H-17Z" fill="#222"/></svg>
          <svg viewBox="-28 -28 56 56"><rect x="-23.500" y="-24" width="47" height="48" rx="4" fill="#0d0d0d"/><rect x="-21" y="-21" width="42" height="42" rx="2" fill="url(#note)"/><path d="M-16 8 -14 14C-12 8-10 4-8 2V14C-4 6-1 -2 3 -6C2 0 2 6 4 9C8 2 12 -6 16 -12C16 -6 14 0 12 4" fill="none" stroke="#9a5b12" stroke-width="4"/></svg>
        </div>
        <u></u>
        <div class="col">
          <svg viewBox="-28 -28 56 56"><use href="#tile"/><path d="M-10 -17H10V18H-10Z" fill="#151515"/><path d="M-7 -14H7V0H-7Z" fill="#c9c9c9"/></svg>
          <svg viewBox="-28 -28 56 56"><circle r="20" fill="#222" stroke="#8b8b8b" stroke-width="6"/><circle r="15" fill="#2a2a2a"/><path d="M9 -11 23 0 9 11Z" fill="#242424"/></svg>
        </div>
        <div class="col">
          <svg viewBox="-28 -28 56 56"><use href="#tile"/><path d="M5 -21V-6M-6 -12H9M-6 -12 1 -21" fill="none" stroke="#666" stroke-width="4"/><path d="M10 2H-4L-6 9C2 7 6 9 5 14C4 18-1 20-6 20" fill="none" stroke="#1c1c1c" stroke-width="5"/></svg>
          <svg viewBox="-28 -28 56 56"><use href="#tile"/><path d="M-17 -15H17V-7H-17ZM-17 -3H17V5H-17ZM-17 9H17V17H-17Z" fill="#d4d4d4" stroke="#222" stroke-width="2"/></svg>
        </div>
        <u></u>
        <div class="col">
          <svg viewBox="-28 -28 56 56"><rect x="-23.500" y="-24" width="47" height="48" rx="4" fill="#0d0d0d"/><rect x="-21" y="-21" width="42" height="42" rx="2" fill="url(#pink)"/><rect x="-21" y="-21" width="42" height="42" rx="2" fill="url(#sheen)"/><path d="M-21 8H21" stroke="#7a1550" stroke-width="2"/><circle cx="-19" cy="8" r="3.500" fill="#fff" stroke="#000" stroke-width="1.500"/><circle cx="8" cy="8" r="3.500" fill="#fff" stroke="#000" stroke-width="1.500"/></svg>
          <svg viewBox="-28 -28 56 56"><rect x="-23.500" y="-24" width="47" height="48" rx="4" fill="#0d0d0d"/><path d="M-21 -21H21V21H-21Z" fill="#5bc23a"/><path d="M-21 -21H-11V-10H-21Z" fill="#e8fbb0"/><path d="M-11 -21H0V-10H-11ZM11 -10H21V0H11Z" fill="#a5ee5a"/><path d="M0 -21H11V-10H0Z" fill="#6ad02c"/><path d="M11 -21H21V-10H11Z" fill="#d6f79a"/><path d="M-11 -10H0V0H-11ZM0 0H11V11H0Z" fill="#b4f24a"/><path d="M-11 0H0V11H-11Z" fill="#1c5510"/><path d="M-11 11H0V21H-11Z" fill="#0d3208"/><path d="M11 0H21V21H11Z" fill="#7cf0c0"/><path d="M0 11H11V21H0Z" fill="#3f8f20"/></svg>
        </div>
      </div>
      <div class="cap">Input<i></i></div>
    </div>
    <div class="group">
      <div class="cols">
        <div class="col">
          <svg viewBox="-28 -28 56 56"><path d="M7 -16C4 -8-6 -2-10 5M7 -16C11 -8 11 0 9 8" fill="none" stroke="#6e1a12" stroke-width="3"/><path d="M7 -20C-4 -23-12 -15-14 -5C-4 -4 4 -10 7 -20Z" fill="#7dbb2c"/><circle cx="-11" cy="8" r="9" fill="url(#cherry)"/><circle cx="9" cy="13" r="9.500" fill="url(#cherry)"/></svg>
          <svg viewBox="-28 -28 56 56"><rect x="-23.500" y="-24" width="47" height="48" rx="4" fill="#0d0d0d"/><rect x="-21" y="-21" width="42" height="40" fill="#c9c9c9"/><path d="M-19 -6C-20 -14-10 -18 0 -17C12 -18 20 -12 18 -5C12 -8 8 0 4 2C0 4-4 2-6 0C-10 -6-14 -6-19 -6Z" fill="#222" opacity=".6"/><path d="M-3 19C-1 12-1 8-3 4L-12 -3M3 19C1 12 2 8 4 4L13 -4M-12 -3-18 -4M-9 0-13 -9M13 -4 18 -3M9 0 11 -10M0 19V-14M-1 4-7 -14M1 4 6 -14" fill="none" stroke="#151515" stroke-width="2.600"/></svg>
        </div>
        <u></u>
        <div class="col">
          <svg viewBox="-28 -28 56 56"><path d="M-17 -6H0V-14L17 1 0 15V8H-17Z" fill="#555" stroke="#1c1c1c" stroke-width="3"/></svg>
          <svg viewBox="-28 -28 56 56"><path d="M-18 -7H0V-15L20 0 0 15V8H-18Z" fill="#dcdcdc" stroke="#777" stroke-width="1.500"/></svg>
        </div>
        <u></u>
        <div class="col">
          <svg viewBox="-28 -28 56 56"><ellipse cx="-5" cy="-3" rx="13" ry="16" transform="rotate(25 -5 -3)" fill="#c6c6c6"/><ellipse cx="-5" cy="-2" rx="4" ry="4.500" fill="#4a4a4a"/><ellipse cx="8" cy="8" rx="11" ry="14" transform="rotate(30 8 8)" fill="#d9447f" stroke="#7c2448" stroke-width="1"/><path d="M2 3C6 -2 14 -4 17 0C12 1 8 4 6 8Z" fill="#f3a6c0"/><ellipse cx="5" cy="8" rx="3.500" ry="4" fill="#6c1238"/></svg>
          <svg viewBox="-28 -28 56 56"><path d="M-6 -18H0V-3L12 15C13 19 11 20 8 20H-13C-17 20-18 18-17 15L-6 -3Z" fill="#e8d5dc"/><path d="M-8 0H3L12 15C13 19 11 20 8 20H-13C-17 20-18 18-17 15Z" fill="#d43a7c"/><path d="M-8 0H3L5 5H-11Z" fill="#f08aa8"/></svg>
        </div>
      </div>
      <div class="cap">Util<i></i></div>
    </div>
  </div>
  <div class="gbar">
    <div class="btn b1"><svg viewBox="-20 -20 40 40"><path d="M-8 -13H2L6 -8V4H-8Z" fill="#eee"/><path d="M-12 0H-4L0 -4H12V13H-12Z" fill="#8ccf52"/></svg></div>
    <div class="btn b2"><svg viewBox="-20 -20 40 40"><path d="M-14 -14H14V14H-10L-14 10Z" fill="#2d68d8"/><path d="M-10 -13H10V-1H-10Z" fill="#eee"/><path d="M-6 5H6V14H-6Z" fill="#c6d4ee"/><path d="M-3 7H0V13H-3Z" fill="#224"/></svg></div>
    <u></u>
    <div class="combo"><span>144%</span><em><svg viewBox="-16 -16 32 32"><path d="M-6 -3 0 4 6 -3" fill="none" stroke="#fff" stroke-width="3"/></svg></em></div>
    <div class="btn b3"><svg viewBox="-20 -20 40 40"><path d="M-14 -5V-13H-4M4 -13H14V-5M14 5V13H4M-4 13H-14V5" fill="none" stroke="#1a1a1a" stroke-width="4.500"/><path d="M-3 -3 3 3M3 -3-3 3" stroke="#222" stroke-width="2.500"/></svg></div>
    <div class="btn b4"><svg viewBox="-20 -20 40 40"><path d="M-13 0C-7 -10 7 -10 13 0C7 9-7 9-13 0Z" fill="#d8e6ee"/><circle r="7.500" fill="#4ea0cf"/><circle r="3.500" fill="#0e1c2a"/></svg></div>
    <div class="btn b5"><svg viewBox="-20 -20 40 40"><path d="M-3 5 6 -11C9 -12 13 -9 13 -6L4 11Z" fill="#d8452c"/><path d="M-5 12-3 5 4 11Z" fill="#f0c060"/><path d="M-14 -4C-10 -7-8 0-11 5C-14 12-9 14-5 12" fill="none" stroke="#4a120c" stroke-width="2.500"/></svg></div>
    <div class="push"></div>
    <div class="btn r1"><svg viewBox="-20 -20 40 40"><path d="M-9 -3C-6 -10 0 -15 5 -12C11 -8 9 0 7 3H-7Z" fill="#d4d4d4"/><path d="M-9 -3C-6 -10 0 -15 5 -12L0 0Z" fill="#f2f2f2"/><ellipse cy="5" rx="10" ry="6" fill="#2c2c2c"/><path d="M-10 8C-6 16 6 16 10 8" fill="none" stroke="#bbb" stroke-width="2"/></svg></div>
    <div class="btn r2"><svg viewBox="-20 -20 40 40"><path d="M-14 3C-12 -4-4 -13 3 -13C10 -12 14 -8 13 -2C11 5 4 13-2 13C-9 12-15 8-14 3Z" fill="none" stroke="#333" stroke-width="2.500"/><path d="M-8 6-1 -5M-1 9 6 -2M1 -6C4 -9 9 -6 6 -2" fill="none" stroke="#333" stroke-width="2.500"/></svg></div>
    <div class="btn r3"><svg viewBox="-20 -20 40 40"><path d="M-14 3C-12 -4-4 -13 3 -13C10 -12 14 -8 13 -2C11 5 4 13-2 13C-9 12-15 8-14 3Z" fill="#c0261a"/><path d="M-6 -6C-2 -11 2 -13 6 -12C10 -11 13 -7 13 -3Z" fill="#dd4a36"/><ellipse cx="5" cy="-7" rx="5" ry="3" fill="#7c120c"/></svg></div>
    <u class="u2"></u>
    <div class="btn r4"><svg viewBox="-20 -20 40 40"><path d="M-4 -7C0 -14 8 -14 13 -8L11 7C6 14 0 14-3 9C-5 3-1 0-4 -7Z" fill="#43b0aa"/><ellipse cx="6" cy="-8" rx="5" ry="3" fill="#1b6460"/><path d="M-12 -12C-4 -8-6 2-4 9C-2 13 4 14 8 13" fill="none" stroke="#222" stroke-width="1.800"/></svg></div>
    <div class="btn r5"><svg viewBox="-20 -20 40 40"><path d="M-5 -5C-2 -11 3 -14 8 -12C14 -9 14 -4 12 2L5 8Z" fill="#7cc040"/><ellipse cx="6" cy="-7" rx="5" ry="3" fill="#35691a"/><path d="M-14 4-7 -5 5 9C2 14-4 15-9 13C-14 11-14 8-14 4Z" fill="#d9d9d9"/></svg></div>
    <div class="btn r6"><svg viewBox="-20 -20 40 40"><path d="M0 -13A13 13 0 0 0 0 13Z" fill="#dd8434"/><path d="M0 -13A13 13 0 0 1 0 13Z" fill="#e6e6e6"/></svg></div>
    <u class="u3"></u>
    <div class="btn r7"><svg viewBox="-20 -20 40 40"><circle r="11" fill="url(#sky)" stroke="#24408c" stroke-width="1.500"/></svg></div>
  </div>
  <div class="canvas">
    <svg viewBox="1703 340 1707 1750">
      <path d="M2095.300 340V2090M2526.500 340V2090M2957.600 340V2090M3388.800 340V2090M1703 421.800H3410M1703 565.600H3410M1703 709.300H3410M1703 853.100H3410M1703 996.900H3410M1703 1140.600H3410M1703 1284.400H3410M1703 1428.200H3410M1703 1572H3410M1703 1715.700H3410M1703 1859.500H3410M1703 2003.300H3410" stroke="#c1bfba" stroke-width="2.800"/>
      <g fill="none" stroke="#000" stroke-opacity=".62" stroke-width="8">
        <path d="M2420 491C2760 491 2980 440 3193 338"/>
        <path d="M2420 491C2760 491 3080 514 3412 569"/>
        <path d="M2420 491C2760 491 3080 516 3412 575"/>
        <path d="M2420 491C2760 491 3080 520 3412 583"/>
        <path d="M2420 491C2760 491 3090 530 3412 615"/>
        <path d="M2420 491C2760 491 3100 560 3412 670"/>
        <path d="M2420 491C2760 491 3100 575 3412 728"/>
        <path d="M2420 491C2780 491 3080 580 3412 864"/>
      </g>
      <g fill="none" stroke="#97d24f" stroke-width="8">
        <path d="M2486 1434C2800 1434 3080 1360 3412 1114" stroke="#8bae5c"/>
        <path d="M2486 1434C2780 1434 3080 1500 3412 1722" stroke="#8bae5c"/>
        <path d="M2486 1434C2780 1434 3080 1454 3412 1514"/>
        <path d="M2486 1434C2780 1434 3080 1457 3412 1520"/>
        <path d="M2486 1434C2780 1434 3080 1463 3412 1534"/>
        <path d="M2486 1434C2780 1434 3080 1470 3412 1556"/>
        <path d="M2486 1434C2780 1434 3080 1480 3412 1620"/>
        <path d="M2486 1434C2780 1434 3080 1490 3412 1684"/>
      </g>
      <g stroke="#000" stroke-width="4" fill="#fff"><circle cx="2408" cy="491" r="11"/><circle cx="2474" cy="1434" r="11"/></g>
      <rect x="1900.500" y="458.500" width="508" height="63" rx="10" fill="#f6f5f1"/>
      <path d="M1912 462H2060V519H1912Q1903 519 1903 510V471Q1903 462 1912 462Z" fill="url(#capA)"/>
      <path d="M2060 462H2397Q2406 462 2406 471V510Q2406 519 2397 519H2060Z" fill="url(#capB)"/>
      <rect x="1903" y="462" width="503" height="57.500" rx="9" fill="none" stroke="#333" stroke-width="3"/><path d="M2060.500 462V519" stroke="#333" stroke-width="3"/>
      <path d="M2089.500 475V491.500H2377.500V475M2118.300 481V491M2147.100 481V491M2175.900 481V491M2204.700 481V491M2233.500 475V491M2262.300 481V491M2291.100 481V491M2319.900 481V491M2348.700 481V491" fill="none" stroke="#b9b9b9" stroke-width="1.800"/>
      <circle cx="2220.300" cy="490.700" r="8.800" fill="#fff" stroke="#000" stroke-width="5"/>
      <text class="lab" x="1915" y="503.500" textLength="131">Base size</text><text class="lab" x="2236.500" y="503.500" textLength="99">40.000</text>
      <rect x="1898" y="1402" width="577" height="63" rx="10" fill="#eef3e4"/>
      <path d="M1909 1405.500H2127V1463H1909Q1900 1463 1900 1454V1414Q1900 1405.500 1909 1405.500Z" fill="url(#capC)"/>
      <path d="M2127 1405.500H2463Q2472 1405.500 2472 1414V1454Q2472 1463 2463 1463H2127Z" fill="url(#capD)"/>
      <rect x="1900" y="1405.500" width="572" height="57.500" rx="9" fill="none" stroke="#1e3a06" stroke-width="3"/><path d="M2127 1405.500V1463" stroke="#1e3a06" stroke-width="3"/>
      <path d="M2156 1419V1434.500H2444V1419M2184.800 1425V1434M2213.600 1425V1434M2242.400 1425V1434M2271.200 1425V1434M2300 1419V1434M2328.800 1425V1434M2357.600 1425V1434M2386.400 1425V1434M2415.200 1425V1434" fill="none" stroke="#80b04a" stroke-width="1.800"/>
      <circle cx="2202" cy="1434" r="8.800" fill="#fff" stroke="#000" stroke-width="5"/>
      <text class="lab" x="1911.500" y="1447" textLength="201">Material depth</text><text class="lab" x="2217.500" y="1447" textLength="76">1.600</text>
      <path d="M1700 2032H1715V2086H1700Z" fill="#939393" stroke="#000" stroke-width="3"/><path d="M1700 2033.500H1713.500V2053H1700Z" fill="#d0d0d0"/>
      <path d="M3314 1976 3328 1982 3326 1994 3314 1990Z" fill="#000"/><circle cx="3323" cy="1998" r="6"/><circle cx="3312" cy="2010" r="6"/><circle cx="3366" cy="1992" r="5"/>
      <path d="M3372 1995A42 42 0 0 1 3391 2024M3391 2030A42 42 0 0 1 3358 2070" fill="none" stroke="#000" stroke-width="7" stroke-linecap="round"/>
      <circle cx="3349" cy="2029" r="38.500" fill="url(#dial)" stroke="#fff" stroke-width="3.500"/><circle cx="3349" cy="2029" r="40.500" fill="none" stroke="#2a2a2a" stroke-width="1.500"/>
      <path d="M3324 2000 3334 1996V2007ZM3370 2016 3378 2004 3383 2016ZM3316 2044H3326L3321 2053ZM3361 2052 3371 2058 3362 2064Z" fill="#fff"/>
    </svg>
  </div>
  <footer class="gstatus"><span>...</span><span>1.0.0008</span></footer>
</section>
</div>
</body>
</html>
```
FILE: styles.css
```css
* { box-sizing: border-box; }
body { margin: 0; background: #8f968a; font-family: Inter, "Liberation Sans", sans-serif; font-size: 22px; }
.defs { position: absolute; }
.screen { display: flex; width: 3410px; height: 2140px; overflow: hidden; background: linear-gradient(#a4ab9c 0 4px, #1a1512 4px); }
.window { display: flex; flex-direction: column; flex: none; height: 2134px; margin-top: 4px; overflow: hidden; }
.rhino { width: 1703px; height: 2136px; background: #444; border-top-left-radius: 14px; border-bottom: 2px solid #626262; }
.gh { position: relative; width: 1707px; height: 2135px; background: #2c2b29; border-radius: 20px; box-shadow: 0 0 0 1.500px #000, 0 20px 80px 10px rgba(0,0,0,.62); }
.gh::after { content: ""; position: absolute; inset: 0; border-radius: 20px; border: 1.500px solid #6b6b6b; border-top-color: #777672; pointer-events: none; }
.titlebar { display: flex; align-items: center; flex: none; height: 56px; padding-left: 6px; gap: 16px; background: #2b2a28; border-top: 2px solid #595957; border-bottom: 2px solid #000; }
.light { flex: none; width: 24px; height: 24px; border-radius: 50%; background: #51504e; margin-bottom: 4px; }
.dirty { border: 8px solid #51504e; background: #2f2e2c; }
.red { background: #ec695e; } .yellow { background: #f4bd4f; } .green { background: #61c554; }
.doc { display: flex; flex: none; align-items: center; gap: 13px; margin-left: 1447px; padding-bottom: 6px; color: #757473; font-size: 26px; font-weight: 600; white-space: nowrap; }

.tools { display: flex; flex: none; height: 148px; background: #323232; }
.grip { display: flex; flex-direction: column; gap: 6px; width: 24px; padding: 52px 0 0 6px; border-right: 2px solid #444; }
.grip i, .sidegrip i, .grip2 i { width: 6px; height: 6px; border: 1.500px solid #777; border-radius: 50%; flex: none; }
.toolmain { flex: 1; min-width: 0; }
.rtabs { display: flex; height: 40px; background: #323232; line-height: 41px; white-space: nowrap; }
.rtabs b { flex: none; width: 135px; padding-left: 21px; color: #f0f0f0; font-weight: 600; letter-spacing: -.3px; border-radius: 0 10px 0 0; background: #323232; }
.rtabs .rest { display: flex; flex: 1; gap: 41px; padding-left: 21px; color: #8d8d8d; background: #444; border-bottom-left-radius: 10px; letter-spacing: -.04px; }
.iconbar { display: flex; }
.iconbar svg, .palette svg { flex: none; width: 76px; height: 76px; }
.more { background: linear-gradient(135deg, transparent 50%, #a8a8a8 50%) right bottom / 17px 16px no-repeat; }
.lens { fill: none; stroke: #e2e2e2; stroke-width: 3; }

.work { display: flex; flex: none; height: 1838px; padding-top: 6px; gap: 6px; }
.side { display: flex; flex-direction: column; flex: none; width: 248px; gap: 6px; }
.sidegrip { display: flex; gap: 6px; height: 26px; padding: 10px 0 0 100px; background: #323232; border-radius: 0 12px 0 0; }
.palettebox { height: 888px; margin-top: -4px; background: #323232; }
.cmd { width: 216px; height: 38px; margin: 22px 0 26px 14px; padding-left: 6px; background: #3a3a3a; border: 1px solid #484848; border-bottom-color: #666; color: #6a6a6a; font-size: 26px; line-height: 36px; letter-spacing: -.2px; }
.palette { display: grid; grid-template-columns: repeat(3, 76px); margin-left: 4px; }
.wl { fill: none; stroke: #e2e2e2; stroke-width: 8; }
.gl { fill: none; stroke: #8e8e8e; stroke-width: 7; }
.osnap { flex: 1; background: #323232; border-radius: 0 12px 0 0; overflow: hidden; }
.oshead { display: flex; justify-content: space-between; align-items: center; height: 40px; padding: 0 7px 2px 5px; color: #8f8f8f; font-size: 24px; }
.ostabs { display: flex; height: 42px; background: #323232; border-top: 2px solid #444; }
.ostabs .on { width: 68px; padding: 5px 0 0 15px; background: #323232; }
.ostabs .off { flex: 1; padding: 5px 0 0 21px; background: #444; border-bottom-left-radius: 10px; }
.checks { padding: 18px 0 0 24px; color: #686868; }
.checks label { display: flex; align-items: center; gap: 8px; height: 24px; margin-bottom: 6px; line-height: 24px; letter-spacing: -.1px; }
.checks label::before { content: ""; width: 24px; height: 24px; border-radius: 5px; background: linear-gradient(#454545, #4e4e4e); box-shadow: 0 1px 1px #222; }
.checks .yes { margin-top: 40px; color: #ececec; }
.checks .yes::before { content: "✓"; background: linear-gradient(#545454, #6a6a6a); color: #fff; font: 700 22px/24px "DejaVu Sans", sans-serif; text-align: center; }

.view { flex: 1; min-width: 0; }
.viewport { position: relative; height: 1780px; }
.scene, .canvas svg { display: block; width: 100%; height: 100%; }
.axis { font: 28px Inter, sans-serif; fill: #626466; }
.viewtag { position: absolute; left: 2px; top: 2px; display: flex; width: 94px; height: 38px; background: #929292; color: #fff; font-size: 26px; line-height: 38px; }
.viewtag b { width: 62px; padding-left: 8px; border-right: 2px solid #fff; letter-spacing: -1.500px; }
.viewtag i { margin: 16px 0 0 8px; width: 0; height: 0; border: 8px solid transparent; border-top-color: #fff; border-bottom: 0; }
.viewtabs { display: flex; height: 52px; padding: 10px 0 0 19px; background: #414141; color: #a2a2a2; font-size: 26px; line-height: 24px; letter-spacing: -.45px; white-space: nowrap; }
.viewtabs .single { margin: 0 28px 0 32px; }
.viewtabs span { height: 28px; border-left: 2px solid #888; padding: 0 40.500px 0 38px; }
.viewtabs span:last-child { letter-spacing: -.2px; padding-left: 40px; }
.viewtabs .sel { color: #4b8bf5; }

.cmdline { display: flex; flex: none; height: 34px; margin-top: 6px; background: #323232; color: #c0c0c0; font: 24px/36px "Liberation Sans", sans-serif; }
.cmdline span { padding-left: 10px; }
.grip2 { display: flex; flex-direction: column; gap: 6px; width: 38px; padding: 6px 0 0 12px; border-right: 2px solid #444; }
.rstatus { display: flex; align-items: center; flex: none; height: 48px; background: #323232; color: #c0c0c0; white-space: nowrap; }
.rstatus > * { flex: none; }
.s1 { margin-left: 31px; width: 201px; } .s2 { width: 117px; } .s3 { width: 107px; } .s4 { width: 162px; } .s5 { width: 166px; }
.rstatus i { width: 32px; height: 32px; background: #000; border: 2px solid #e4e4e4; margin-right: 13px; }
.s6 { width: 192px; } .s7 { width: 145px; } .s8 { width: 101px; } .s9 { width: 107px; } .s10 { width: 90px; }
.rstatus b { width: 170px; height: 38px; padding-left: 16px; background: #1f1f1f; border-radius: 6px; line-height: 38px; color: #eee; letter-spacing: .4px; }

.gh .titlebar { background: #3b3a38; border-top-color: #777672; padding-left: 13px; }
.gh h1 { margin: 0 0 0 555px; padding-bottom: 6px; color: #b9b7b5; font-size: 26px; font-weight: 600; letter-spacing: .33px; white-space: nowrap; }
.gtabs { display: flex; flex: none; height: 42px; font-family: "Liberation Sans", sans-serif; font-size: 23px; line-height: 44px; color: #a2a2a2; background: #3d3d3d; white-space: nowrap; }
.gtabs b { flex: none; width: 101px; padding-left: 9px; font-weight: 400; line-height: 36px; color: #f2f2f2; background: linear-gradient(#4d4d4d, #3e3e3e); border-radius: 0 10px 0 0; }
.gtabs .rest { display: flex; flex: 1; gap: 24px; padding-left: 10px; letter-spacing: .17px; background: #323232; border-bottom: 2px solid #262626; border-left: 2px solid #262626; border-bottom-left-radius: 12px; }
.ribbon { display: flex; align-items: flex-start; flex: none; gap: 8px; height: 178px; padding: 4px 0 0 4px; background: linear-gradient(#3d3d3d, #303030); border-bottom: 2px solid #454442; }
.group { height: 146px; border: 2px solid #7e7e7e; border-radius: 8px; overflow: hidden; background: linear-gradient(#383838, #303030); }
.cols { display: flex; height: 117px; padding: 3px 3px 0 1px; }
.col { width: 56px; }
.col svg { display: block; width: 56px; height: 56px; }
.cols u { width: 20px; background: linear-gradient(transparent, #ccc, transparent) center / 2px 106px no-repeat; }
.cap { position: relative; height: 25px; background: #070707; color: #ddd; font: 20px/25px "Liberation Sans", sans-serif; text-align: center; padding-right: 22px; }
.cap i { position: absolute; right: 5px; top: 7px; width: 14px; height: 14px; background: #999; clip-path: polygon(42% 0, 58% 0, 58% 40%, 100% 40%, 50% 100%, 0 40%, 42% 40%); }
.glyph { font: 700 31px "Liberation Serif", serif; fill: #fff; text-anchor: middle; }
.glyph.small { font-size: 25px; }

.gbar { display: flex; align-items: center; flex: none; height: 60px; background: #2c2b29; }
.btn { display: flex; flex: none; justify-content: center; height: 40px; border-radius: 9px; background: #5f5e5c; border-top: 1px solid #7b7a78; }
.btn svg { width: 40px; height: 40px; }
.b1 { width: 50px; margin-right: 5px; } .b2 { width: 52px; } .b3 { width: 64px; margin-left: 5px; } .b4 { width: 64px; margin-left: 22px; } .b5 { width: 52px; margin-left: 20px; }
.gbar u { width: 2px; height: 32px; background: #454442; margin: 0 8px; }
.combo { display: flex; align-items: center; width: 148px; height: 40px; padding: 0 3px 0 20px; justify-content: space-between; border: 1px solid #454442; border-bottom-color: #666; border-radius: 8px; color: #eee; font-size: 26px; letter-spacing: -.4px; }
.combo em { width: 32px; height: 32px; border-radius: 7px; background: linear-gradient(#3f7ee8, #3068cf); }
.combo em svg { display: block; }
.push { flex: 1; }
.r1, .r2, .r3 { width: 52px; margin-right: 2px; }
.gbar .u2 { margin: 0 14px 0 12px; } .gbar .u3 { margin: 0 4px 0 4px; }
.r3 { background: #2d63db; border-color: #4f80ee; }
.r4, .r5, .r6 { width: 51px; margin-right: 1px; }
.r7 { width: 64px; margin-right: 20px; }
.canvas { flex: none; height: 1750px; background: #dbd9d3; }
.lab { font: 29.500px "Open Sans", "Noto Sans", sans-serif; fill: #000; }
.gstatus { display: flex; justify-content: space-between; flex: 1; padding: 0 141px 0 6px; background: #2c2b29; border-top: 2px solid #444340; color: #ddd; font-size: 26px; line-height: 44px; }
```
